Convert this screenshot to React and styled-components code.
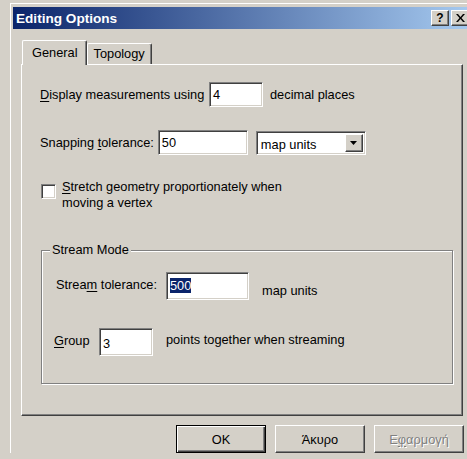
import React from "react";
import styled, { createGlobalStyle } from "styled-components";

const Global = createGlobalStyle`
  html, body {
    margin: 0;
    padding: 0;
    background: #d4d0c8;
    overflow: hidden;
  }
  body {
    font-family: "Liberation Sans", Arial, sans-serif;
    font-size: 12.8px;
    color: #000;
  }
`;

const raised = `
  border-top: 1px solid #fff;
  border-left: 1px solid #fff;
  border-right: 1px solid #404040;
  border-bottom: 1px solid #404040;
  box-shadow: inset -1px -1px 0 #808080;
`;

const sunken = `
  border-top: 1px solid #808080;
  border-left: 1px solid #808080;
  border-right: 1px solid #fff;
  border-bottom: 1px solid #fff;
  box-shadow: inset 1px 1px 0 #404040, inset -1px -1px 0 #d4d0c8;
`;

const Window = styled.div`
  margin: 3px 0 0 10px;
  width: 460px;
  border-top: 1px solid #fff;
  border-left: 1px solid #fff;
  padding: 3px 0 0 2px;
`;

const TitleBar = styled.div`
  display: flex;
  align-items: center;
  height: 22px;
  width: 458px;
  padding: 0 2px;
  box-sizing: border-box;
  background: linear-gradient(to right, #0a246a, #a6caf0);
`;

const Title = styled.div`
  flex: 1;
  color: #fff;
  font-weight: bold;
  font-size: 13.6px;
  padding-left: 1px;
`;

const TitleButton = styled.div`
  width: 18px;
  height: 16px;
  box-sizing: border-box;
  margin-left: ${p => (p.$gap ? "2px" : "0")};
  background: #d4d0c8;
  ${raised}
  display: flex;
  align-items: center;
  justify-content: center;
  font-weight: bold;
  font-size: 12px;
  line-height: 1;
`;

const Body = styled.div`
  padding: 11px 8px 0 8px;
  width: 458px;
  box-sizing: border-box;
`;

const TabStrip = styled.div`
  display: flex;
  align-items: flex-end;
  padding-left: 1px;
  height: 24px;
`;

const Tab = styled.div`
  position: relative;
  box-sizing: border-box;
  height: ${p => (p.$active ? "25px" : "21px")};
  margin-bottom: ${p => (p.$active ? "-1px" : "0")};
  z-index: ${p => (p.$active ? 1 : 0)};
  padding: ${p => (p.$active ? "4px 8px 0 9px" : "2px 6px 0 6px")};
  background: #d4d0c8;
  border-top: 1px solid #fff;
  border-left: 1px solid #fff;
  border-right: 1px solid #404040;
  box-shadow: inset -1px 0 0 #808080;
  border-radius: 2px 2px 0 0;
`;

const Panel = styled.div`
  box-sizing: border-box;
  height: 352px;
  ${raised}
  padding: 17px 0 0 18px;
`;

const Row = styled.div`
  display: flex;
  align-items: ${p => p.$align || "center"};
  height: ${p => p.$h || 25}px;
  margin-top: ${p => p.$mt || 0}px;
`;

const Label = styled.span`
  width: ${p => (p.$w ? `${p.$w}px` : "auto")};
  flex: none;
  margin-left: ${p => p.$ml || 0}px;
  margin-right: ${p => p.$mr || 0}px;
  margin-top: ${p => p.$mt || 0}px;
  white-space: nowrap;
`;

const Key = styled.span`
  text-decoration: underline;
  text-underline-offset: 2px;
`;

const TextBox = styled.div`
  box-sizing: border-box;
  width: ${p => p.$w}px;
  height: ${p => p.$h || 25}px;
  background: #fff;
  ${sunken}
  padding: ${p => p.$pt || 4}px 3px 0 3px;
  flex: none;
`;

const Selected = styled.span`
  background: #0a246a;
  color: #fff;
`;

const Select = styled.div`
  box-sizing: border-box;
  display: flex;
  width: 110px;
  height: 24px;
  margin-left: 8px;
  background: #fff;
  ${sunken}
  padding: 2px;
`;

const SelectText = styled.div`
  flex: 1;
  padding: 3px 0 0 2px;
`;

const DropButton = styled.div`
  box-sizing: border-box;
  width: 18px;
  height: 18px;
  background: #d4d0c8;
  ${raised}
  display: flex;
  align-items: center;
  justify-content: center;
`;

const Check = styled.div`
  box-sizing: border-box;
  width: 15px;
  height: 15px;
  margin: 5px 0 0 1px;
  background: #fff;
  ${sunken}
  flex: none;
`;

const CheckText = styled.div`
  margin-left: 6px;
  line-height: 16px;
`;

const Group = styled.fieldset`
  margin: 31px 0 0 1px;
  padding: 0;
  width: 412px;
  height: 142px;
  box-sizing: border-box;
  min-width: 0;
  border: 1px solid #808080;
  box-shadow: inset 1px 1px 0 #fff, 1px 1px 0 #fff;
`;

const Legend = styled.legend`
  margin-left: 8px;
  padding: 0 2px;
  line-height: 16px;
  background: #d4d0c8;
`;

const GroupInner = styled.div`
  padding: 14px 0 0 13px;
`;

const Buttons = styled.div`
  display: flex;
  justify-content: flex-end;
  gap: 9px;
  margin: 9px -1px 0 0;
`;

const Button = styled.div`
  box-sizing: border-box;
  width: 90px;
  height: 28px;
  display: flex;
  align-items: center;
  justify-content: center;
  background: #d4d0c8;
  color: ${p => (p.$disabled ? "#808080" : "#000")};
  text-shadow: ${p => (p.$disabled ? "1px 1px 0 #fff" : "none")};
  ${p =>
    p.$default
      ? `border: 1px solid #000;
         box-shadow: inset 1px 1px 0 #fff, inset -1px -1px 0 #404040, inset -2px -2px 0 #808080;`
      : raised}
`;

export default function App() {
  return (
    <>
      <Global />
      <Window>
        <TitleBar>
          <Title>Editing Options</Title>
          <TitleButton>?</TitleButton>
          <TitleButton $gap>
            <svg width="9" height="8" viewBox="0 0 9 8">
              <path d="M0 0h2l2.5 3 2.5-3h2L5.5 4 9 8H7L4.5 5 2 8H0l3.5-4z" fill="#000" />
            </svg>
          </TitleButton>
        </TitleBar>
        <Body>
          <TabStrip>
            <Tab $active>General</Tab>
            <Tab>Topology</Tab>
          </TabStrip>
          <Panel>
            <Row>
              <Label $w={169}>
                <Key>D</Key>isplay measurements using
              </Label>
              <TextBox $w={54}>4</TextBox>
              <Label $ml={7}>decimal places</Label>
            </Row>
            <Row $mt={23}>
              <Label $mr={4}>
                Snapping <Key>t</Key>olerance:
              </Label>
              <TextBox $w={90}>50</TextBox>
              <Select>
                <SelectText>map units</SelectText>
                <DropButton>
                  <svg width="7" height="4" viewBox="0 0 7 4">
                    <path d="M0 0h7L3.5 4z" fill="#000" />
                  </svg>
                </DropButton>
              </Select>
            </Row>
            <Row $mt={24} $h={32} $align="flex-start">
              <Check />
              <CheckText>
                <Key>S</Key>tretch geometry proportionately when
                <br />
                moving a vertex
              </CheckText>
            </Row>
            <Group>
              <Legend>Stream Mode</Legend>
              <GroupInner>
                <Row $h={28} $align="flex-start">
                  <Label $w={110} $ml={1} $mt={5}>
                    Strea<Key>m</Key> tolerance:
                  </Label>
                  <TextBox $w={83} $h={28} $pt={5}>
                    <Selected>500</Selected>
                  </TextBox>
                  <Label $ml={13} $mt={11}>map units</Label>
                </Row>
                <Row $mt={28} $h={28} $align="flex-start">
                  <Label $w={45} $ml={-1} $mt={5}>
                    <Key>G</Key>roup
                  </Label>
                  <TextBox $w={54} $h={28} $pt={7}>3</TextBox>
                  <Label $ml={13} $mt={4}>points together when streaming</Label>
                </Row>
              </GroupInner>
            </Group>
          </Panel>
          <Buttons>
            <Button $default>OK</Button>
            <Button>Άκυρο</Button>
            <Button $disabled>
              Ε<Key>φ</Key>αρμογή
            </Button>
          </Buttons>
        </Body>
      </Window>
    </>
  );
}
